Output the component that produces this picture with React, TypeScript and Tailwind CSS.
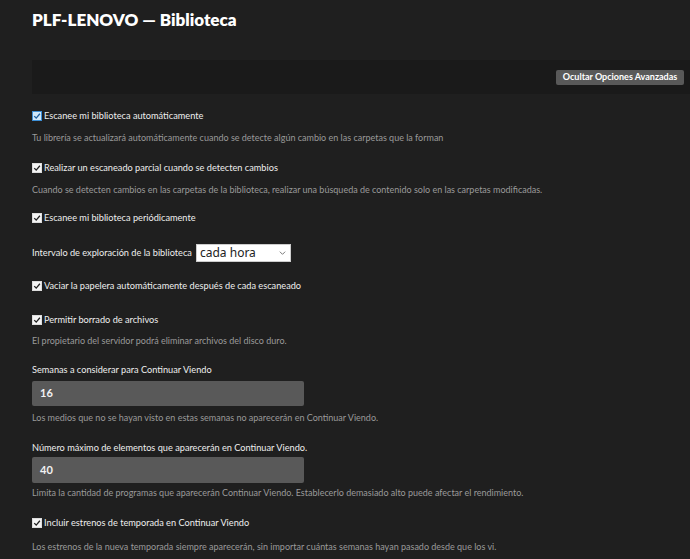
import React from "react";

const font = { fontFamily: 'Lato, "Noto Sans", sans-serif' };

function Check({ focused = false }: { focused?: boolean }) {
  return (
    <span
      className={
        "inline-flex h-[10px] w-[10px] shrink-0 items-center justify-center " +
        (focused ? "bg-[#cfe8fb] border border-[#3d8fd6]" : "bg-[#f4f4f4] border border-[#dcdcdc]")
      }
    >
      <svg viewBox="0 0 10 10" className="h-[8px] w-[8px]">
        <path
          d="M1.5 5.2 L4 7.6 L8.6 2.2"
          fill="none"
          stroke={focused ? "#1f5f9e" : "#222"}
          strokeWidth="1.6"
        />
      </svg>
    </span>
  );
}

function CheckRow({ label, focused, className }: { label: string; focused?: boolean; className: string }) {
  return (
    <div className={"flex h-[14px] items-center gap-[2px] text-[9.2px] text-[#eeeeee] " + className}>
      <Check focused={focused} />
      <span className="leading-[14px]">{label}</span>
    </div>
  );
}

function Desc({ text, className }: { text: string; className: string }) {
  return <div className={"h-[14px] text-[9px] leading-[14px] text-[#9a9a9a] " + className}>{text}</div>;
}

function Label({ text, className }: { text: string; className: string }) {
  return <div className={"h-[14px] text-[9.2px] leading-[14px] text-[#eeeeee] " + className}>{text}</div>;
}

export default function App() {
  return (
    <div className="min-h-screen w-full bg-[#1f1f1f] pl-[32px]" style={font}>
      <div className="pt-[8px] text-[17px] font-extrabold leading-[24px] text-white">
        PLF-LENOVO — Biblioteca
      </div>

      <div className="mt-[28px] flex h-[34px] items-center justify-end bg-[#1a1a1a] pr-[6px]">
        <button className="flex h-[15px] w-[128px] items-center justify-center rounded-[2px] bg-[#595959] text-[9px] font-bold text-white">
          Ocultar Opciones Avanzadas
        </button>
      </div>

      <CheckRow className="mt-[15px]" focused label="Escanee mi biblioteca automáticamente" />
      <Desc
        className="mt-[8px]"
        text="Tu librería se actualizará automáticamente cuando se detecte algún cambio en las carpetas que la forman"
      />

      <CheckRow className="mt-[16px]" label="Realizar un escaneado parcial cuando se detecten cambios" />
      <Desc
        className="mt-[8px]"
        text="Cuando se detecten cambios en las carpetas de la biblioteca, realizar una búsqueda de contenido solo en las carpetas modificadas."
      />

      <CheckRow className="mt-[14px]" label="Escanee mi biblioteca periódicamente" />

      <div className="mt-[19px] flex h-[18px] items-center">
        <span className="w-[164px] whitespace-nowrap text-[9.2px] text-[#eeeeee]">
          Intervalo de exploración de la biblioteca
        </span>
        <div className="flex h-[18px] w-[95px] items-center justify-between border border-[#cccccc] bg-white pl-[3px] pr-[4px]">
          <span
            className="text-[12px] leading-[16px] text-[#222]"
            style={{ fontFamily: '"Noto Sans", sans-serif' }}
          >
            cada hora
          </span>
          <svg viewBox="0 0 10 6" className="h-[4px] w-[7px]">
            <path d="M1 1 L5 5 L9 1" fill="none" stroke="#666" strokeWidth="1.3" />
          </svg>
        </div>
      </div>

      <CheckRow className="mt-[17px]" label="Vaciar la papelera automáticamente después de cada escaneado" />

      <CheckRow className="mt-[20px]" label="Permitir borrado de archivos" />
      <Desc className="mt-[7px]" text="El propietario del servidor podrá eliminar archivos del disco duro." />

      <Label className="mt-[15px]" text="Semanas a considerar para Continuar Viendo" />
      <div className="mt-[4px] flex h-[25px] w-[272px] items-center rounded-[2px] bg-[#595959] pl-[8px] text-[11px] font-bold text-[#f2f2f2]">
        16
      </div>
      <Desc
        className="mt-[5px]"
        text="Los medios que no se hayan visto en estas semanas no aparecerán en Continuar Viendo."
      />

      <Label className="mt-[16px]" text="Número máximo de elementos que aparecerán en Continuar Viendo." />
      <div className="mt-[2px] flex h-[26px] w-[272px] items-center rounded-[2px] bg-[#595959] pl-[8px] text-[11px] font-bold text-[#f2f2f2]">
        40
      </div>
      <Desc
        className="mt-[3px]"
        text="Limita la cantidad de programas que aparecerán Continuar Viendo. Establecerlo demasiado alto puede afectar el rendimiento."
      />

      <CheckRow className="mt-[16px]" label="Incluir estrenos de temporada en Continuar Viendo" />
      <Desc
        className="mt-[10px]"
        text="Los estrenos de la nueva temporada siempre aparecerán, sin importar cuántas semanas hayan pasado desde que los vi."
      />
    </div>
  );
}
